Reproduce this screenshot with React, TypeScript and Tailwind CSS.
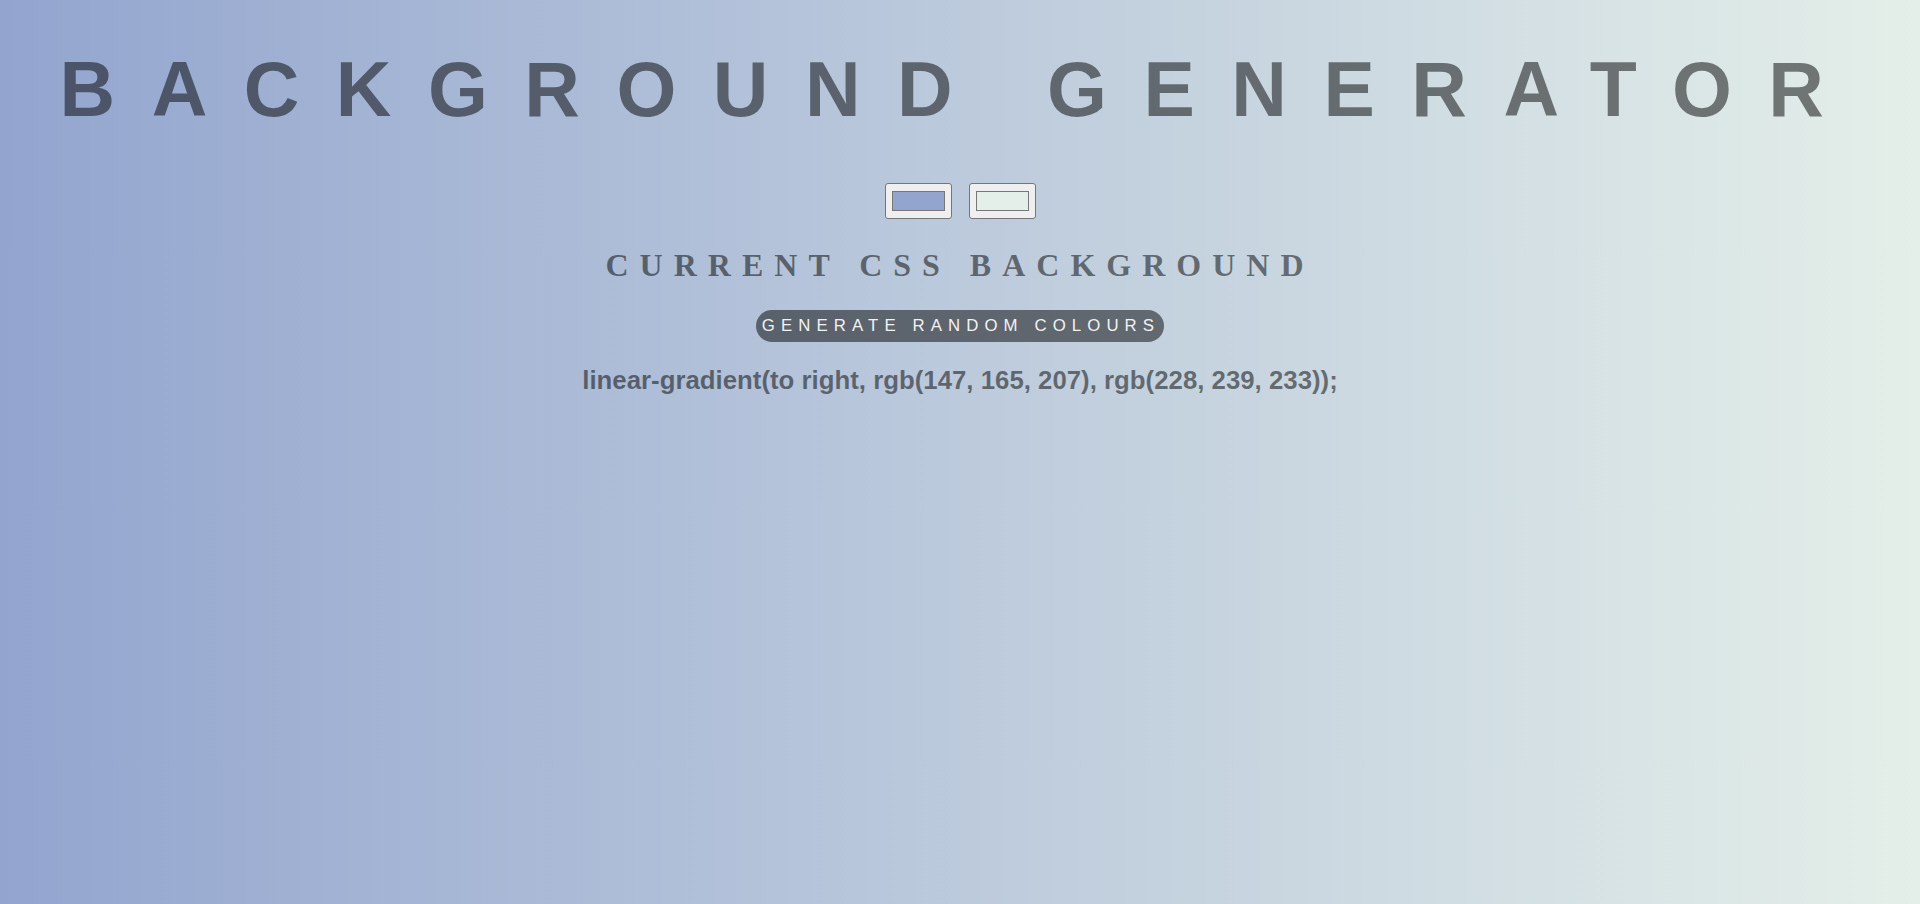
import React from "react";

function Swatch({ color }: { color: string }) {
  return (
    <button
      type="button"
      className="box-border flex h-[36px] w-[67px] items-stretch rounded-[3px] border border-[#767676] bg-[#efefef] px-[6px] py-[7px]"
    >
      <span className="block flex-1 border border-[#777777]" style={{ backgroundColor: color }} />
    </button>
  );
}

export default function App() {
  const c1 = "rgb(147, 165, 207)";
  const c2 = "rgb(228, 239, 233)";
  return (
    <div className="min-h-screen w-full bg-[linear-gradient(to_right,rgb(147,165,207),rgb(228,239,233))] text-center">
      <div className="flex flex-col items-center pt-[51px]">
        <h1 className="whitespace-nowrap font-['Liberation_Sans',Arial,sans-serif] text-[77px] font-bold leading-[77px] tracking-[36.5px] text-black/50">
          BACKGROUND GENERATOR
        </h1>
        <div className="mt-[55px] flex gap-[17px]">
          <Swatch color={c1} />
          <Swatch color={c2} />
        </div>
        <h2 className="mt-[30px] whitespace-nowrap font-['Liberation_Serif','Times_New_Roman',serif] text-[32px] font-bold leading-[32px] tracking-[11px] text-black/50">
          CURRENT CSS BACKGROUND
        </h2>
        <button
          type="button"
          className="mt-[29px] flex h-[32px] items-center rounded-full bg-black/50 pl-[6px] pr-[4px] pb-[1px] font-['Liberation_Sans',Arial,sans-serif] text-[16.8px] leading-[18px] tracking-[6.1px] text-[#f2f2f2]"
        >
          GENERATE RANDOM COLOURS
        </button>
        <h3 className="mt-[25px] whitespace-nowrap font-['Liberation_Sans',Arial,sans-serif] text-[25.8px] font-bold leading-[26px] text-black/50">
          linear-gradient(to right, {c1}, {c2});
        </h3>
      </div>
    </div>
  );
}
